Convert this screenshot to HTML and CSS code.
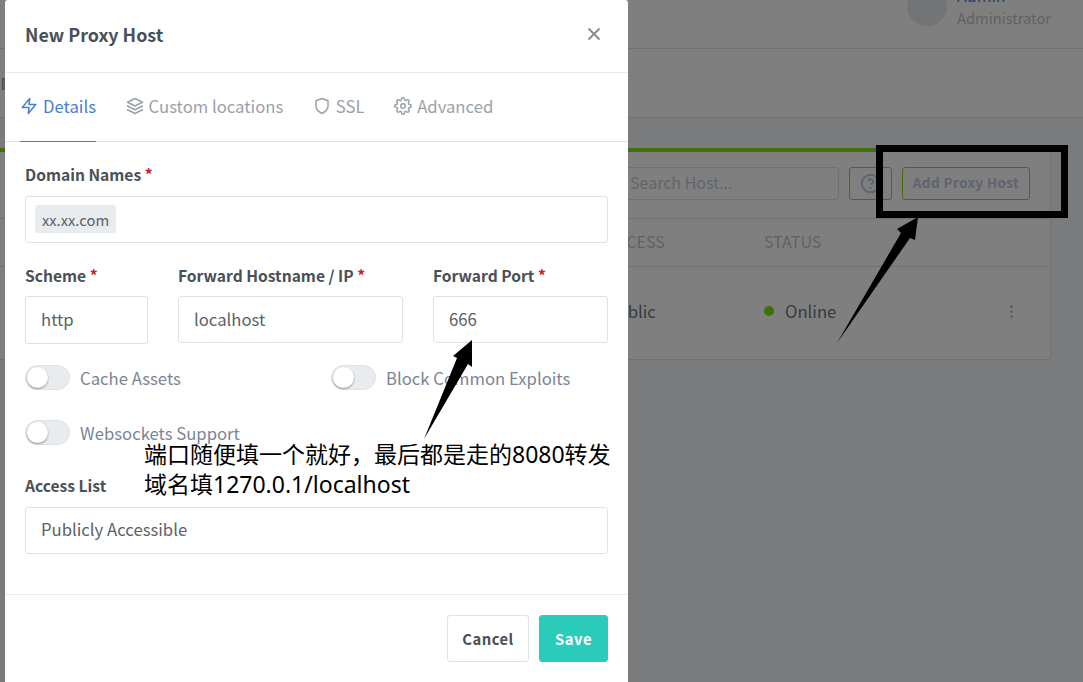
FILE: index.html
```html
<!DOCTYPE html>
<html lang="zh">
<head>
    <meta charset="UTF-8">
    <title>New Proxy Host</title>
    <link rel="stylesheet" href="styles.css">
</head>
<body>
    <div class="page">
        <header class="topbar">
            <div class="avatar"></div>
            <div class="user">
                <div class="user-name">Admin</div>
                <div class="user-role">Administrator</div>
            </div>
        </header>
        <nav class="navbar"><span class="nav-mark"></span></nav>
        <main class="content">
            <section class="card">
                <div class="toolbar">
                    <div class="search">Search Host<span class="ellipsis">…</span></div>
                    <div class="help-btn">
                        <svg viewBox="0 0 24 24" width="21" height="21" fill="none" stroke="currentColor" stroke-width="2.4"><circle cx="12" cy="12" r="10"/><path d="M9.1 9a3 3 0 0 1 5.8 1c0 2-3 3-3 3"/><line x1="12" y1="16" x2="12" y2="18"/></svg>
                    </div>
                    <div class="add-btn">Add Proxy Host</div>
                </div>
                <div class="grid-row head-row">
                    <span></span><span>ACCESS</span><span>STATUS</span><span></span>
                </div>
                <div class="grid-row body-row">
                    <span></span><span>Public</span>
                    <span class="status"><i class="dot"></i>Online</span>
                    <span class="more"><i></i><i></i><i></i></span>
                </div>
            </section>
        </main>
    </div>

    <div class="backdrop"></div>

    <div class="modal">
        <div class="modal-header">
            <h5 class="modal-title">New Proxy Host</h5>
            <svg class="close" viewBox="0 0 14 14" width="14" height="14"><path d="M1.5 1.5l11 11M12.5 1.5l-11 11" stroke="currentColor" stroke-width="2" fill="none"/></svg>
        </div>
        <ul class="tabs">
            <li class="tab active">
                <svg class="tab-icon" viewBox="0 0 24 24"><polygon points="13 2 3 14 12 14 11 22 21 10 12 10 13 2"/></svg>Details
            </li>
            <li class="tab">
                <svg class="tab-icon" viewBox="0 0 24 24"><polygon points="12 2 2 7 12 12 22 7 12 2"/><polyline points="2 17 12 22 22 17"/><polyline points="2 12 12 17 22 12"/></svg>Custom locations
            </li>
            <li class="tab">
                <svg class="tab-icon" viewBox="0 0 24 24"><path d="M12 22s8-4 8-10V5l-8-3-8 3v7c0 6 8 10 8 10z"/></svg>SSL
            </li>
            <li class="tab">
                <svg class="tab-icon" viewBox="0 0 24 24"><circle cx="12" cy="12" r="3"/><path d="M19.4 15a1.65 1.65 0 0 0 .33 1.82l.06.06a2 2 0 0 1 0 2.83 2 2 0 0 1-2.83 0l-.06-.06a1.65 1.65 0 0 0-1.82-.33 1.65 1.65 0 0 0-1 1.51V21a2 2 0 0 1-2 2 2 2 0 0 1-2-2v-.09A1.65 1.65 0 0 0 9 19.4a1.65 1.65 0 0 0-1.82.33l-.06.06a2 2 0 0 1-2.83 0 2 2 0 0 1 0-2.83l.06-.06a1.65 1.65 0 0 0 .33-1.82 1.65 1.65 0 0 0-1.51-1H3a2 2 0 0 1-2-2 2 2 0 0 1 2-2h.09A1.65 1.65 0 0 0 4.6 9a1.65 1.65 0 0 0-.33-1.82l-.06-.06a2 2 0 0 1 0-2.83 2 2 0 0 1 2.83 0l.06.06a1.65 1.65 0 0 0 1.82.33H9a1.65 1.65 0 0 0 1-1.51V3a2 2 0 0 1 2-2 2 2 0 0 1 2 2v.09a1.65 1.65 0 0 0 1 1.51 1.65 1.65 0 0 0 1.82-.33l.06-.06a2 2 0 0 1 2.83 0 2 2 0 0 1 0 2.83l-.06.06a1.65 1.65 0 0 0-.33 1.82V9a1.65 1.65 0 0 0 1.51 1H21a2 2 0 0 1 2 2 2 2 0 0 1-2 2h-.09a1.65 1.65 0 0 0-1.51 1z"/></svg>Advanced
            </li>
        </ul>
        <form class="modal-body">
            <label class="form-label">Domain Names <span class="req">*</span></label>
            <div class="form-control domains gap-top"><span class="chip">xx.xx.com</span></div>

            <div class="forward-row">
                <div>
                    <label class="form-label">Scheme <span class="req">*</span></label>
                    <div class="form-control select">http</div>
                </div>
                <div>
                    <label class="form-label">Forward Hostname / IP <span class="req">*</span></label>
                    <div class="form-control">localhost</div>
                </div>
                <div>
                    <label class="form-label">Forward Port <span class="req">*</span></label>
                    <div class="form-control">666</div>
                </div>
            </div>

            <div class="switch-grid">
                <div class="switch"><i class="track"></i>Cache Assets</div>
                <div class="switch"><i class="track"></i>Block Common Exploits</div>
                <div class="switch"><i class="track"></i>Websockets Support</div>
            </div>

            <label class="form-label">Access List</label>
            <div class="form-control gap-top access">Publicly Accessible</div>
        </form>
        <div class="modal-footer">
            <div class="btn btn-cancel">Cancel</div>
            <div class="btn btn-save">Save</div>
        </div>
    </div>

    <!-- annotations drawn over the screenshot -->
    <div class="mark-box"></div>
    <svg class="arrows" viewBox="0 0 1083 682" width="1083" height="682">
        <polygon points="472,340 453,356 457,358 424,439 468,364 472,367"/>
        <polygon points="918,217 897,229 901,233 837,343 910,238 915,240"/>
    </svg>
    <div class="note">端口随便填一个就好，最后都是走的8080转发<br>域名填1270.0.1/localhost</div>
</body>
</html>
```

FILE: styles.css
```css
* {
    box-sizing: border-box;
}
html, body {
    margin: 0;
    height: 682px;
    overflow: hidden;
}
body {
    font-family: "Noto Sans CJK SC", "Noto Sans", sans-serif;
    font-size: 16.7px;
    color: #495057;
    background: #f5f7fb;
}

/* page behind the dialog */
.page {
    height: 682px;
}
.topbar {
    height: 49px;
    background: #fff;
    border-bottom: 1px solid #dfe3e9;
    display: flex;
    justify-content: flex-end;
    gap: 10px;
    padding-right: 31px;
}
.avatar {
    width: 40px;
    height: 40px;
    margin-top: -14px;
    border-radius: 50%;
    background: #e4e8ea;
}
.user {
    margin-top: -16px;
    width: 95px;
    line-height: 22px;
}
.user-name {
    color: #467fcf;
    font-size: 16px;
    line-height: 23px;
}
.user-role {
    color: #bcc4d0;
    font-size: 14.7px;
}
.navbar {
    height: 69px;
    padding-top: 2px;
    background: #fff;
    border-bottom: 1px solid #dfe3e9;
    display: flex;
    align-items: center;
}
.nav-mark {
    width: 4px;
    height: 12px;
    margin-left: 2px;
    background: #b8c4d0;
    border: 1px solid #b89a8c;
}
.content {
    padding: 30px 32px 0 0;
}
.card {
    background: #fff;
    border: 1px solid #dfe3e9;
    border-left: none;
    border-top: 4px solid #80e010;
    border-radius: 0 3px 3px 0;
}
.toolbar {
    height: 67px;
    display: flex;
    align-items: center;
    justify-content: flex-end;
    gap: 10px;
    padding: 0 20px 3px 0;
    border-bottom: 1px solid #dfe3e9;
}
.search {
    width: 240px;
    height: 33px;
    line-height: 29px;
    padding-left: 30px;
    border: 1px solid #dfe3e9;
    border-radius: 3px;
    color: #c4ccd6;
    font-size: 16px;
}
.ellipsis {
    font-family: "Noto Sans", sans-serif;
}
.help-btn {
    width: 43px;
    height: 33px;
    border: 1px solid #aab0b4;
    border-radius: 3px;
    color: #bccbe8;
    display: flex;
    align-items: center;
    justify-content: center;
}
.add-btn {
    width: 128px;
    height: 33px;
    line-height: 29px;
    text-align: center;
    border: 1px solid #80e010;
    border-radius: 3px;
    color: #c0c8e0;
    font-size: 13.5px;
    font-weight: 700;
    letter-spacing: .4px;
}
.grid-row {
    display: grid;
    grid-template-columns: 607px 157px 1fr 40px;
    align-items: center;
    border-bottom: 1px solid #dfe3e9;
}
.head-row {
    height: 48px;
    padding-bottom: 4px;
    color: #bcc4d0;
    font-size: 16px;
}
.body-row {
    height: 92px;
    padding-bottom: 4px;
    border-bottom: none;
    color: #6e767e;
}
.status {
    display: flex;
    align-items: center;
}
.dot {
    width: 10px;
    height: 10px;
    margin-right: 11px;
    border-radius: 50%;
    background: #80e010;
}
.more {
    display: flex;
    flex-direction: column;
    gap: 2px;
}
.more i {
    width: 3px;
    height: 3px;
    border-radius: 50%;
    background: #bcc4d0;
}
.backdrop {
    position: absolute;
    inset: 0;
    background: rgba(0, 0, 0, .5);
}

/* dialog */
.modal {
    position: absolute;
    left: 5px;
    top: 0;
    width: 623px;
    height: 700px;
    background: #fff;
    border-radius: 3px;
}
.modal-header {
    height: 73px;
    padding: 0 27px 4px 20px;
    display: flex;
    align-items: center;
    justify-content: space-between;
    border-bottom: 1px solid #e9ecef;
}
.modal-title {
    margin: 0;
    font-size: 17.9px;
    font-weight: 700;
}
.close {
    color: #868e96;
}
.tabs {
    list-style: none;
    margin: 0;
    padding: 0 0 0 15px;
    height: 69px;
    display: flex;
    gap: 29.6px;
    border-bottom: 1px solid #dee2e6;
}
.tab {
    height: 69px;
    padding-bottom: 2px;
    display: flex;
    align-items: center;
    gap: 5px;
    color: #9aa0ac;
    border-bottom: 1px solid transparent;
}
.tab.active {
    color: #467fcf;
    border-bottom-color: #467fcf;
}
.tab-icon {
    width: 18px;
    height: 18px;
    fill: none;
    stroke: currentColor;
    stroke-width: 2;
    stroke-linecap: round;
    stroke-linejoin: round;
}
.modal-body {
    height: 453px;
    padding: 21px 20px 0;
    border-bottom: 1px solid #e9ecef;
}
.form-label {
    display: block;
    height: 22px;
    line-height: 22px;
    margin-bottom: 10px;
    font-size: 15.6px;
    font-weight: 700;
}
.req {
    color: #cd201f;
}
.form-control {
    height: 47px;
    line-height: 45px;
    padding: 0 15px;
    border: 1px solid #dee2e6;
    border-radius: 3px;
    color: #5a6268;
}
.form-control.select {
    height: 48px;
}
.form-control.access {
    line-height: 43px;
}
.gap-top {
    margin-top: 11px;
}
.domains {
    padding: 8px 9px;
    line-height: 1;
}
.chip {
    display: inline-block;
    height: 28px;
    line-height: 29px;
    padding: 0 7px;
    background: #e9ecef;
    border-radius: 3px;
    font-size: 14.8px;
}
.forward-row {
    display: grid;
    grid-template-columns: 123px 225px 175px;
    gap: 30px;
    margin-top: 21px;
}
.switch-grid {
    display: grid;
    grid-template-columns: 306px 1fr;
    row-gap: 30px;
    margin-top: 21px;
    margin-bottom: 29px;
}
.switch {
    height: 25px;
    display: flex;
    align-items: center;
    gap: 10px;
    color: #7b8496;
}
.track {
    position: relative;
    width: 45px;
    height: 25px;
    background: #e9ecef;
    border: 1px solid #dee2e6;
    border-radius: 13px;
}
.track::after {
    content: "";
    position: absolute;
    left: 1px;
    top: 1px;
    width: 21px;
    height: 21px;
    border-radius: 50%;
    background: #fff;
    box-shadow: 0 1px 2px rgba(0, 0, 0, .4);
}
.modal-footer {
    display: flex;
    justify-content: flex-end;
    gap: 10px;
    padding: 20px 20px 0;
}
.btn {
    height: 47px;
    line-height: 45px;
    text-align: center;
    border-radius: 3px;
    font-size: 14.8px;
    font-weight: 700;
    letter-spacing: .5px;
}
.btn-cancel {
    width: 82px;
    background: #fff;
    border: 1px solid #dee2e6;
}
.btn-save {
    width: 69px;
    background: #2bcbba;
    border: 1px solid #2bcbba;
    color: #fff;
}

/* annotations */
.mark-box {
    position: absolute;
    left: 876px;
    top: 145px;
    width: 192px;
    height: 73px;
    border: 7px solid #000;
}
.arrows {
    position: absolute;
    left: 0;
    top: 0;
    fill: #000;
}
.note {
    position: absolute;
    left: 144px;
    top: 439px;
    width: 480px;
    font-family: "Noto Sans", "Noto Sans CJK SC", sans-serif;
    color: #000;
    font-size: 23px;
    line-height: 30px;
    white-space: nowrap;
}
```
